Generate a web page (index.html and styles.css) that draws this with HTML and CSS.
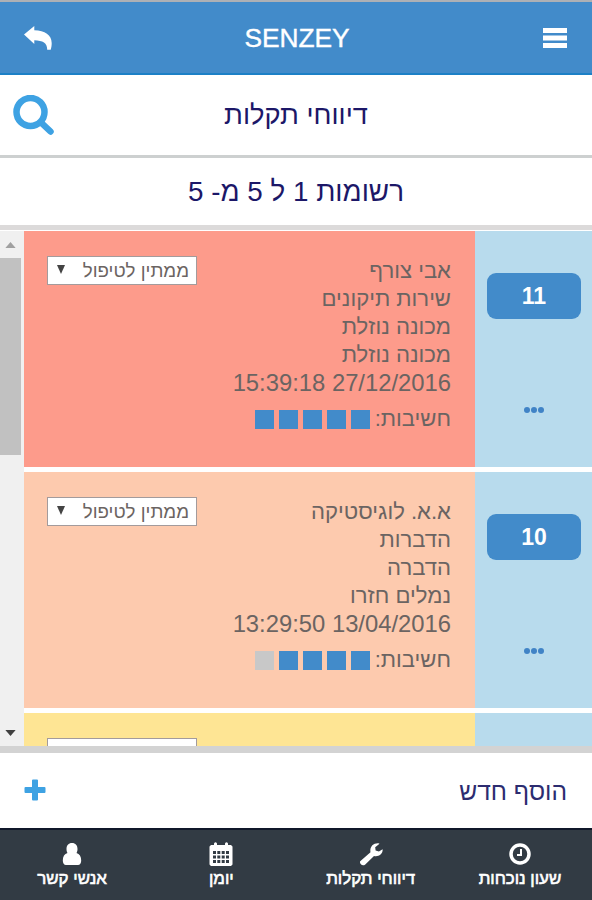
FILE: index.html
```
<!DOCTYPE HTML>
<html lang="he" dir="rtl">
<head>
<meta charset=utf-8 />
<meta name="viewport" content="width=device-width, initial-scale=1.0" />
<title>SENZEY</title>
<link rel="stylesheet" href="styles.css">
</head>
<body>
<header>
  <svg class="menu" viewBox="0 0 24 22"><path d="M0 1h24v5H0zM0 8.500h24v5H0zM0 16h24v5H0z"/></svg>
  <h1>SENZEY</h1>
  <svg class="back" viewBox="0 0 28 24"><path d="M0 8.500L10.300 0v4.300C21 4.500 27.500 9 27.700 17c0 2.500-.3 4.500-1 6.700h-3.500c.2-6.500-4.400-9.200-12.900-9.400v3.800z"/></svg>
</header>
<div class="title">
  <h2>דיווחי תקלות</h2>
  <svg class="search" viewBox="0 0 42 42"><circle cx="17.500" cy="17" r="14"/><path d="M28.500 28L37.500 36.500"/></svg>
</div>
<div class="count">רשומות 1 ל 5 מ- 5</div>

<div class="list">
  <div class="rows">
    <div class="row">
      <div class="side"><a class="num">11</a><span class="more"><i></i><i></i><i></i></span></div>
      <div class="info red">
        <div class="text">
          <p>אבי צורף</p>
          <p>שירות תיקונים</p>
          <p>מכונה נוזלת</p>
          <p>מכונה נוזלת</p>
          <p class="date">27/12/2016 15:39:18</p>
          <p class="rank">חשיבות: <b></b><b></b><b></b><b></b><b></b></p>
        </div>
        <div class="status"><span>ממתין לטיפול</span><svg viewBox="0 0 8 9"><path d="M0 0h8L4 9z"/></svg></div>
      </div>
    </div>
    <div class="row">
      <div class="side"><a class="num">10</a><span class="more"><i></i><i></i><i></i></span></div>
      <div class="info orange">
        <div class="text">
          <p>א.א. לוגיסטיקה</p>
          <p>הדברות</p>
          <p>הדברה</p>
          <p>נמלים חזרו</p>
          <p class="date">13/04/2016 13:29:50</p>
          <p class="rank">חשיבות: <b></b><b></b><b></b><b></b><b class="off"></b></p>
        </div>
        <div class="status"><span>ממתין לטיפול</span><svg viewBox="0 0 8 9"><path d="M0 0h8L4 9z"/></svg></div>
      </div>
    </div>
    <div class="row">
      <div class="side"></div>
      <div class="info yellow"><div class="text"></div><div class="status"></div></div>
    </div>
  </div>
  <div class="scroll">
    <svg class="up" viewBox="0 0 12 7"><path d="M0 7h12L6 0z"/></svg>
    <div class="thumb"></div>
    <svg class="down" viewBox="0 0 12 7"><path d="M0 0h12L6 7z"/></svg>
  </div>
</div>

<div class="add">
  <span>הוסף חדש</span>
  <svg viewBox="0 0 22 22"><path d="M8 1.500q0-1 1-1h4q1 0 1 1V8h6.500q1 0 1 1v4q0 1-1 1H14v6.500q0 1-1 1H9q-1 0-1-1V14H1.500q-1 0-1-1V9q0-1 1-1H8z"/></svg>
</div>

<footer>
  <a>
    <svg viewBox="0 0 24 24"><circle class="ring" cx="12" cy="12" r="9"/><path class="hand" d="M13 7v6H9"/></svg>
    <span>שעון נוכחות</span>
  </a>
  <a>
    <svg viewBox="0 0 24 24"><path d="M1.200 19.300L11.500 10.300C10.500 5 14 .8 19.500 1.200l1 .5-4.300 3.500.4 3.300 3.300 1.100 3.700-2.400c.6 4.500-4.200 8-8.600 6.700L6 22.700c-2.600 2-6-1-4.800-3.400z"/></svg>
    <span>דיווחי תקלות</span>
  </a>
  <a>
    <svg viewBox="0 0 24 24"><path fill-rule="evenodd" d="M2 3h3V1.500Q6.500-1 8 1.500V3h8V1.500Q17.500-1 19 1.500V3h3l1.500 1.500v18L22 24H2L.5 22.500v-18zM4 9v3h3V9zm4.300 0v3h3V9zm4.400 0v3h3V9zM17 9v3h3V9zM4 13.400v3h3v-3zm4.300 0v3h3v-3zm4.400 0v3h3v-3zm4.300 0v3h3v-3zM4 18v3h3v-3zm4.300 0v3h3v-3zm4.400 0v3h3v-3zm4.300 0v3h3v-3z"/></svg>
    <span>יומן</span>
  </a>
  <a>
    <svg viewBox="0 0 24 24"><path d="M12 1c3.500 0 5.500 2.500 5.500 6 0 1.700-.4 3-1 4 3 .8 4.700 3.500 4.700 7.500 0 2.700-1.200 4.500-3.200 4.500H6c-2 0-3.200-1.800-3.200-4.500 0-4 1.700-6.700 4.700-7.500-.6-1-1-2.300-1-4 0-3.500 2-6 5.500-6z"/></svg>
    <span>אנשי קשר</span>
  </a>
</footer>
</body>
</html>
```

FILE: styles.css
```
* { box-sizing: border-box; }
body { margin: 0; height: 900px; overflow: hidden; display: flex; flex-direction: column; background: #fff; font-family: "Liberation Sans", Arial, sans-serif; }
h1, h2, p { margin: 0; font-weight: normal; }
svg { display: block; }

header { height: 75px; flex: none; display: flex; align-items: center; justify-content: space-between; padding: 1px 25px 0 24px; background: #428bca; border-top: 2px solid #adb0b5; border-bottom: 2px solid #1c80c6; }
header svg { fill: #fff; }
header h1 { margin-right: 1px; color: #fff; font-size: 26.3px; -webkit-text-stroke: 0.4px #fff; }
.menu { width: 24px; height: 22px; }
.back { width: 28px; height: 24px; }

.title { height: 83px; flex: none; display: flex; align-items: center; justify-content: center; position: relative; border-bottom: 3px solid #cdd0d0; color: #1c1768; }
.title h2 { font-size: 27.3px; }
.search { position: absolute; left: 13px; top: 20px; width: 42px; height: 42px; fill: none; stroke: #3ea2e3; stroke-width: 6.5; stroke-linecap: round; }
.count { height: 72px; flex: none; display: flex; align-items: center; justify-content: center; border-bottom: 5px solid #dcdada; color: #1c1768; font-size: 27.8px; }

.list { height: 515px; flex: none; display: flex; margin-top: 1px; overflow: hidden; }
.rows { flex: 1; }
.row { height: 236px; display: flex; margin-bottom: 5px; }
.side { width: 117px; display: flex; flex-direction: column; align-items: center; padding: 42px 0 0 1px; background: #b8dbed; }
.num { width: 94px; height: 46px; border-radius: 9px; background: #428bca; color: #fff; font-size: 23px; font-weight: bold; line-height: 46px; text-align: center; }
.more { display: flex; gap: 1px; margin-top: 88px; }
.more i { width: 6px; height: 6px; border-radius: 3px; background: #4083c6; }

.info { flex: 1; display: flex; justify-content: space-between; align-items: flex-start; padding: 25px 24px 0 23px; color: #6b6462; }
.red { background: #fd9b8b; }
.orange { background: #fdcaae; }
.yellow { background: #fee594; }
.text { padding-top: 1px; font-size: 22.1px; line-height: 28px; white-space: nowrap; }
.date { font-size: 23.8px; }
.rank { display: flex; align-items: center; margin-top: 8px; }
.rank b { width: 19px; height: 19px; margin-right: 5px; background: #428bca; }
.rank b.off { background: #c8c8c8; }
.status { width: 150px; height: 29px; display: flex; align-items: center; justify-content: space-between; padding: 0 7px 0 9px; border: 1px solid #a39b9c; background: #fff; font-size: 18.7px; }
.status svg { width: 8px; height: 9px; fill: #444; margin-bottom: 3px; }

.scroll { width: 24px; display: flex; flex-direction: column; background: #f0f0f0; }
.scroll svg { width: 11px; height: 6px; margin: 11px 0 10px 5px; align-self: flex-end; }
.up { fill: #a0a0a0; }
.thumb { width: 21px; height: 197px; align-self: flex-end; background: #c1c1c1; }
.scroll .down { margin-top: auto; fill: #404040; }

.add { height: 82px; flex: none; display: flex; align-items: center; justify-content: space-between; padding: 0 25px 0 24px; border-top: 7px solid #d3d3d3; color: #2c2c70; font-size: 24.6px; }
.add span { padding-top: 2px; }
.add svg { width: 22px; height: 22px; margin-bottom: 2px; fill: #3ea2e3; }

footer { flex: 1; display: flex; justify-content: center; padding-top: 12px; border-top: 2px solid #10182a; background: #323b44; color: #fff; }
footer a { width: 149.3px; display: flex; flex: none; flex-direction: column; align-items: center; }
footer svg { width: 24px; height: 24px; fill: #fff; }
footer span { padding-top: 1px; font-size: 16.9px; line-height: 24px; -webkit-text-stroke: 0.6px #fff; }
footer .ring { fill: none; stroke: #fff; stroke-width: 3.5; }
footer .hand { fill: none; stroke: #fff; stroke-width: 2; }
```
